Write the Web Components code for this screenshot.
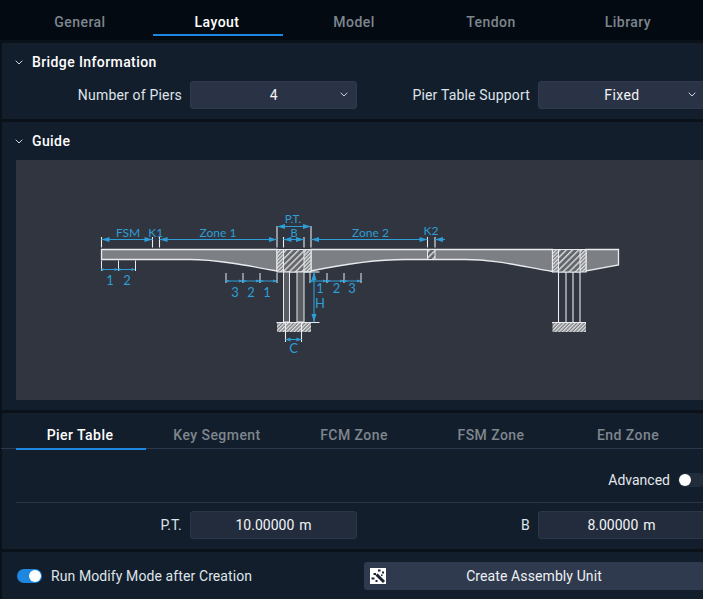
<!DOCTYPE html>
<html lang="en"><head><meta charset="utf-8"><title>Bridge</title>
<style>
html,body{margin:0;height:100%;background:#0a1119;overflow:hidden}
body{font:14px Roboto,"Liberation Sans",sans-serif;color:#e4e8ed}
</style></head>
<body>
<bridge-app>
  <tab-bar variant="top">
    <tab-item>General</tab-item><tab-item active>Layout</tab-item><tab-item>Model</tab-item><tab-item>Tendon</tab-item><tab-item>Library</tab-item>
  </tab-bar>
  <fold-panel heading="Bridge Information" style="height:76px">
    <form-row>
      <form-field label="Number of Piers"><select-box>4</select-box></form-field>
      <form-field label="Pier Table Support"><select-box>Fixed</select-box></form-field>
    </form-row>
  </fold-panel>
  <fold-panel heading="Guide" style="height:288px"><bridge-diagram></bridge-diagram></fold-panel>
  <plain-panel style="height:136px">
    <tab-bar variant="inner">
      <tab-item active>Pier Table</tab-item><tab-item>Key Segment</tab-item><tab-item>FCM Zone</tab-item><tab-item>FSM Zone</tab-item><tab-item>End Zone</tab-item>
    </tab-bar>
    <advanced-row>Advanced</advanced-row>
    <form-row>
      <form-field label="P.T."><value-box>10.00000 m</value-box></form-field>
      <form-field label="B"><value-box>8.00000 m</value-box></form-field>
    </form-row>
  </plain-panel>
  <action-bar></action-bar>
</bridge-app>
<script>
const def=(n,html,extra={})=>customElements.define(n,class extends HTMLElement{
  constructor(){super();this.attachShadow({mode:'open'}).innerHTML=html;}
  connectedCallback(){extra.connected&&extra.connected(this)}
});
const chev=`<svg width="8" height="5" viewBox="0 0 8 5" style="display:block"><path d="M.7.7 4 4 7.3.7" fill="none" stroke="#cdd4dc" stroke-width="1"/></svg>`;

def('bridge-app',`<style>:host{display:flex;flex-direction:column;width:708px;height:599px;overflow:hidden}</style><slot></slot>`);

def('tab-bar',`<style>
:host{display:grid;grid-template-columns:repeat(5,130px);column-gap:7px;padding-left:16px;height:40px;box-sizing:border-box;flex:none;background:#040a12;margin-bottom:3px}
:host([variant=inner]){background:none;margin:0;height:36px;margin-left:-1px;padding-left:15px;border-bottom:1px solid #2c394c;}
</style><slot></slot>`);

def('tab-item',`<style>
:host{display:block;box-sizing:border-box;text-align:center;font:500 14px/1 Roboto,sans-serif;letter-spacing:.45px;color:#7e868e;padding:15px 2px 0 0;height:36px;position:relative}
:host([active]){color:#fff}
:host([active])::after{content:"";position:absolute;left:0;right:0;bottom:0;height:2px;background:#1e88e0}
:host-context(tab-bar[variant=inner]){padding-top:15px;margin-bottom:-1px;height:37px}
</style><slot></slot>`);

def('fold-panel',`<style>
:host{display:block;box-sizing:border-box;flex:none;margin:0 0 3px 2px;background:#131e2c}
.h{display:flex;align-items:center;height:38px;padding-left:13px;font:500 14px/1 Roboto,sans-serif;letter-spacing:.4px;color:#fff}
.c{width:17px;flex:none}
</style><div class="h"><span class="c">${chev}</span><span id="t"></span></div><slot></slot>`,{connected(el){el.shadowRoot.getElementById('t').textContent=el.getAttribute('heading')}});

def('plain-panel',`<style>:host{display:block;box-sizing:border-box;flex:none;margin:0 0 3px 2px;background:#131e2c}</style><slot></slot>`);

def('form-row',`<style>:host{display:grid;grid-template-columns:341px 348px;padding-left:14px}</style><slot></slot>`);

def('form-field',`<style>
:host{display:grid;grid-template-columns:1fr 167px;column-gap:8px;align-items:center;height:28px}
label{text-align:right;font:14px/1 Roboto,sans-serif;letter-spacing:.18px;color:#dfe4ea}
</style><label id="l"></label><slot></slot>`,{connected(el){el.shadowRoot.getElementById('l').textContent=el.getAttribute('label')}});

def('select-box',`<style>
:host{display:flex;align-items:center;position:relative;box-sizing:border-box;height:28px;background:#2a3345;border:1px solid #2f3a4d;border-radius:3px;font:14px/1 Roboto,sans-serif;letter-spacing:.4px;color:#f2f4f6}
.v{flex:1;text-align:center;padding-left:1px}
.c{position:absolute;right:8px;top:10px}
</style><span class="v"><slot></slot></span><span class="c">${chev}</span>`);

def('value-box',`<style>
:host{display:block;box-sizing:border-box;height:28px;background:#232c3d;border:1px solid #2c3648;border-radius:3px;font:14px/26px Roboto,sans-serif;word-spacing:1.5px;color:#f2f4f6;text-align:center}
</style><slot></slot>`);

def('advanced-row',`<style>
:host{display:flex;justify-content:flex-end;align-items:center;box-sizing:border-box;margin-left:14px;height:54px;padding-top:8px;border-bottom:1px solid #2a3444;margin-bottom:8px;font:14px/1 Roboto,sans-serif;color:#e4e8ed;gap:8px;width:690px}
.t{width:28px;height:14px;border-radius:7px;background:#222d3c;position:relative;flex:none}
.t i{position:absolute;left:1px;top:1px;width:12px;height:12px;border-radius:50%;background:#fff}
</style><slot></slot><span class="t"><i></i></span>`);

def('action-bar',`<style>
:host{display:flex;align-items:center;box-sizing:border-box;flex:1;margin-left:2px;background:#131e2c;padding-left:15px;min-height:0}
.t{width:25px;height:14px;border-radius:7px;background:#1e88e0;position:relative;flex:none;margin-right:9px}
.t i{position:absolute;right:1px;top:1px;width:12px;height:12px;border-radius:50%;background:#fff}
.l{font:14px/1 Roboto,sans-serif;letter-spacing:.1px;color:#dfe4ea;width:313px;white-space:nowrap;flex:none}
.b{display:flex;align-items:center;box-sizing:border-box;height:28px;width:340px;background:#2f3a4e;border-radius:3px;padding-left:6px;font:14px/1 Roboto,sans-serif;letter-spacing:.1px;color:#eef1f4;flex:none}
.b span{flex:1;text-align:center;padding-right:22px}
svg{display:block;flex:none}
</style>
<span class="t"><i></i></span><span class="l">Run Modify Mode after Creation</span>
<span class="b"><svg width="16" height="16" viewBox="0 0 16 16"><rect width="16" height="16" fill="#fff"/>
<path d="M6.5 6.5 14 14" stroke="#1b2431" stroke-width="3"/>
<path d="M8 1.5h2.5v2H8zM12 3.5h2v2h-2zM3.5 5H6v2H3.5zM1.5 9.5h3v2h-3zM5.5 12h2v2h-2zM11 6.5h1.5V8H11z" fill="#1b2431"/></svg><span>Create Assembly Unit</span></span>`);

const B='#2f9ed6',W='#e9ebee';
const hd=(x,y,dir,l=8,w=2.5)=>`<path d="M${x} ${y}L${x-dir*l} ${y-w}V${y+w}Z" fill="${B}"/>`;
const ln=(x1,y1,x2,y2,c=W,s=1.1)=>`<line x1="${x1}" y1="${y1}" x2="${x2}" y2="${y2}" stroke="${c}" stroke-width="${s}"/>`;
const tx=(x,y,t,fs=12)=>`<text x="${x}" y="${y}" font-size="${fs}" text-anchor="middle" fill="${B}">${t}</text>`;
function seg(xs,y,top,bot){let o=ln(xs[0],y,xs[xs.length-1],y,B,1);xs.forEach(x=>{o+=ln(x,top,x,bot,W,1);});
  for(let i=0;i<xs.length-1;i++){o+=hd(xs[i]+4,y,1,4,1.6)+hd(xs[i+1],y,1,4,1.6)}return o}
const svg=`<svg width="687" height="240" viewBox="16 160 687 240" font-family="Lato,'Open Sans',sans-serif">
<defs>
<pattern id="h1" width="4.4" height="4.4" patternUnits="userSpaceOnUse" patternTransform="rotate(45)"><rect width="4.4" height="4.4" fill="#63666b"/><rect width="1.5" height="4.4" fill="#d4d5d7"/></pattern>
<pattern id="h2" width="2.6" height="2.6" patternUnits="userSpaceOnUse" patternTransform="rotate(45)"><rect width="2.6" height="2.6" fill="#777a7e"/><rect width="1.3" height="2.6" fill="#e2e3e5"/></pattern>
</defs>
<g stroke="${W}" stroke-width="1.3" fill="#7c7f84">
<path d="M101.5 249.5H277V271C245 265 215 259.5 190 259.5H101.5Z"/>
<path d="M311 249.5H552.5V271.5C520 266 495 259.5 465 259.5H405C375 259.5 345 264 311 271Z"/>
<path d="M586 249.5H618.5V265L586 271Z"/>
</g>
<g stroke="${W}" stroke-width="1">
<rect x="277" y="249.5" width="34" height="22.5" fill="url(#h2)"/>
<rect x="283.5" y="249.5" width="20.5" height="22.5" fill="url(#h1)"/>
<rect x="427.5" y="249.5" width="7.5" height="10" fill="url(#h1)"/>
<rect x="552.5" y="249.5" width="33.5" height="22.5" fill="url(#h2)"/>
<rect x="558.5" y="249.5" width="21.5" height="22.5" fill="url(#h1)"/>
<rect x="283.5" y="272" width="6" height="50" fill="#5a5d62"/>
<rect x="297" y="272" width="7" height="50" fill="#5a5d62"/>
</g>
<rect x="277" y="322.5" width="34" height="9.5" fill="url(#h2)"/>
<rect x="552.5" y="322.5" width="33.5" height="9.5" fill="url(#h2)"/>
${[558.5,566,573,580].map(x=>ln(x,272,x,322)).join('')}
${ln(276.5,322.5,319.5,322.5)}${ln(552,322.5,586,322.5)}
${ln(304,272,319.5,272)}
${ln(285.5,322,285.5,342)}${ln(301.5,322,301.5,342)}
${[[101.5,237],[152.5,237],[159.5,237],[277,226],[283.5,237],[304,237],[311,226],[427.5,237],[435,237]].map(a=>ln(a[0],a[1],a[0],247.5)).join('')}
${ln(101.5,239.5,152.5,239.5,B)}${hd(101.5,239.5,-1)}${hd(152.5,239.5,1)}
${ln(159.5,239.5,277,239.5,B)}${hd(159.5,239.5,-1)}${hd(277,239.5,1)}
${ln(283.5,239.5,304,239.5,B)}${hd(283.5,239.5,-1)}${hd(304,239.5,1)}
${ln(277,226.5,311,226.5,B)}${hd(277,226.5,-1)}${hd(311,226.5,1)}
${ln(311,239.5,427.5,239.5,B)}${hd(311,239.5,-1)}${hd(427.5,239.5,1)}
${ln(435,239.5,445,239.5,B)}${hd(435,239.5,-1)}
${ln(314,272,314,322,B)}<path d="M314 272l-2.5 8h5zM314 322l-2.5-8h5z" fill="${B}"/>
${ln(285.5,339.5,301.5,339.5,B)}${hd(285.5,339.5,-1,5,2)}${hd(301.5,339.5,1,5,2)}
${seg([101.5,118.5,135.5],269.5,260.5,271)}
${seg([226,243,260,277],281,273,283)}
${seg([310,327,344,361],281,273,283)}
${tx(128,237,'FSM')}${tx(155.7,237,'K1')}${tx(218,237,'Zone 1')}${tx(293,222.5,'P.T.',11.5)}${tx(294,237,'B',11)}
${tx(370.5,237,'Zone 2')}${tx(431,235,'K2')}
${tx(110,285,'1',13)}${tx(127,285,'2',13)}
${tx(235,296.5,'3',13)}${tx(251,296.5,'2',13)}${tx(267,296.5,'1',13)}
${tx(320,293,'1',13)}${tx(336.5,293,'2',13)}${tx(352,293,'3',13)}
${tx(320,308,'H',13)}${tx(293.5,353,'C',13)}
</svg>`;
def('bridge-diagram',`<style>:host{display:block;margin-left:14px;height:240px;background:#30353f;overflow:hidden}svg{display:block}</style>${svg}`);
</script>
</body></html>
